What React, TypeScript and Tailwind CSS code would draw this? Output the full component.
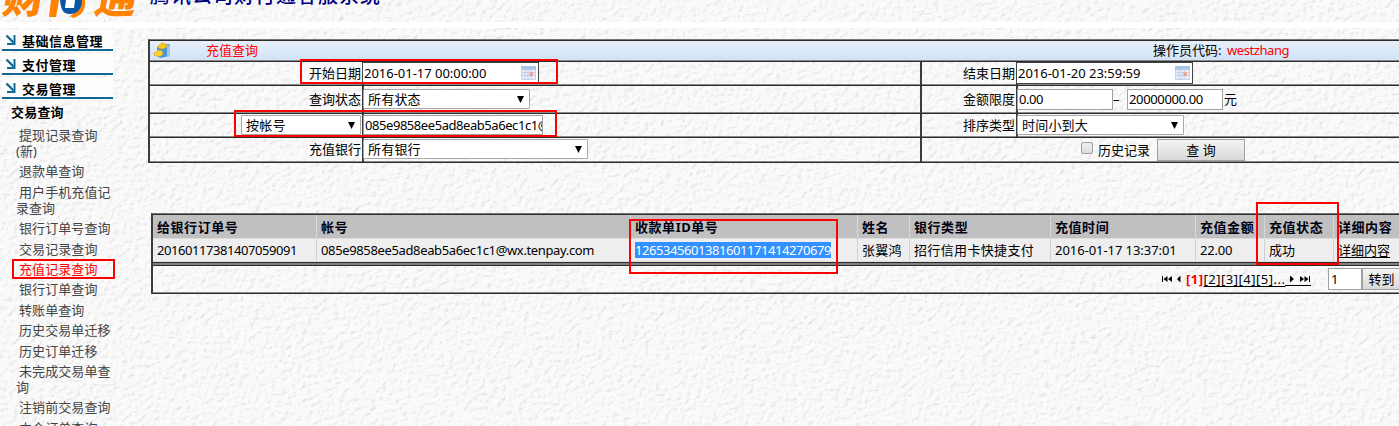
import type { ReactNode } from "react";

function Latin({ children, className = "tracking-[-0.44px]" }: { children: ReactNode; className?: string }) {
  return <span className={className}>{children}</span>;
}

function PaperTexture() {
  return (
    <svg className="absolute inset-0 -z-10" width="1399" height="426" aria-hidden="true">
      <filter id="paper" x="0" y="0" width="100%" height="100%" colorInterpolationFilters="sRGB">
        <feTurbulence type="fractalNoise" baseFrequency="0.19 0.21" numOctaves="3" seed="8" result="n" />
        <feDiffuseLighting in="n" lightingColor="#ffffff" surfaceScale="1.2" diffuseConstant="1.16">
          <feDistantLight azimuth="225" elevation="60" />
        </feDiffuseLighting>
      </filter>
      <rect width="1399" height="426" fill="#f9f9f9" />
      <rect width="1399" height="426" filter="url(#paper)" opacity="0.3" />
    </svg>
  );
}

function Logo() {
  return (
    <svg width="146" height="22" viewBox="0 0 146 22" className="shrink-0">
      <g fontFamily="'Noto Sans CJK SC', sans-serif" fontWeight="900" fontSize="42" fill="#ff8200">
        <text transform="translate(1 13) skewX(-10)">财</text>
        <text transform="translate(93 13) skewX(-10)">通</text>
      </g>
      <path d="M51 0h8l-3 17h-7z" fill="#ff8200" />
      <path d="M79 0h6c1 9-3 16-12 18l-3-2c6-3 9-9 9-16z" fill="#ff8200" />
      <path d="M60 0h22c0 8-4 14-12 14S61 8 60 0z" fill="#0b55a5" />
      <path d="M66 0h9l-1 8h-9z" fill="#fff" />
    </svg>
  );
}

function Arrow() {
  return (
    <svg width="12" height="12" viewBox="0 0 12 12" fill="none" stroke="#126c95" className="-mt-0.5 shrink-0">
      <path d="M1.500 1.500 8.500 8.500" strokeWidth="2.400" />
      <path d="M9.500 1v9H2" strokeWidth="2" />
    </svg>
  );
}

function CalendarIcon() {
  return (
    <svg width="15" height="14" viewBox="0 0 15 14" className="shrink-0">
      <rect width="15" height="14" rx="1" fill="#c3d2ec" />
      <rect width="15" height="3.5" rx="1" fill="#a9c2e6" />
      <rect x="1" y="4" width="13" height="9" fill="#e9effa" />
      <path d="M1 6.5h13M1 9.5h13M4 4v9M7 4v9M10 4v9" stroke="#b7c9e8" strokeWidth=".8" />
      <rect x="8.5" y="6.500" width="3.500" height="3.500" fill="#f2a08a" />
    </svg>
  );
}

function FolderIcon() {
  return (
    <svg width="18" height="17" viewBox="0 0 18 17">
      <path d="M4 5 15 2l2 1v11L7 16l-3-2z" fill="#4a95dc" />
      <path d="m14 3 3 1v10l-3 .7z" fill="#9ccaf4" />
      <path d="M5 4 9 1l4 1 1 3-4 2-4-.5z" fill="#f7c921" stroke="#d79e12" strokeWidth=".6" />
      <path d="m1 11 2-.5L5 8l4 1 1 3-3 2.500-3-.5L1 13z" fill="#ffd52d" stroke="#d79e12" strokeWidth=".6" />
    </svg>
  );
}

function Select({ label, className }: { label: string; className: string }) {
  return (
    <div className={`flex h-[20px] shrink-0 items-center justify-between rounded-[1px] border border-[#a9a9a9] bg-white pr-[5px] pl-[4px] ${className}`}>
      <span className="tracking-[0.2px]">{label}</span>
      <svg width="7" height="7" viewBox="0 0 7 7"><path d="M0 0h7L3.5 7z" fill="#000" /></svg>
    </div>
  );
}

function DateField({ value, className }: { value: string; className: string }) {
  return (
    <div className={`flex h-[22px] w-[177px] items-center justify-between border border-[#444] bg-white pr-0.5 pl-px ${className}`}>
      <Latin className="-mt-px tracking-[-0.02px]">{value}</Latin>
      <CalendarIcon />
    </div>
  );
}

function Row({ className, left, leftField, right, rightField }: {
  className: string; left: ReactNode; leftField: ReactNode; right: ReactNode; rightField: ReactNode;
}) {
  return (
    <div className={`flex border-b border-[#2c2c2c] shadow-[inset_0_-1px_#8a8a8a] ${className}`}>
      <div className="flex w-[214px] shrink-0 items-center justify-end border-r-2 border-[#3c3c3c] pr-px pb-0.5">{left}</div>
      <div className="flex w-[556px] shrink-0 items-center pb-px">{leftField}</div>
      <div className="flex w-[98px] shrink-0 items-center justify-end border-l-2 border-r-2 border-[#3c3c3c] pr-px pb-0.5">{right}</div>
      <div className="flex flex-1 items-center pb-px">{rightField}</div>
    </div>
  );
}

const menu: { lines: string[]; active?: boolean }[] = [
  { lines: ["提现记录查询", "(新)"] },
  { lines: ["退款单查询"] },
  { lines: ["用户手机充值记", "录查询"] },
  { lines: ["银行订单号查询"] },
  { lines: ["交易记录查询"] },
  { lines: ["充值记录查询"], active: true },
  { lines: ["银行订单查询"] },
  { lines: ["转账单查询"] },
  { lines: ["历史交易单迁移"] },
  { lines: ["历史订单迁移"] },
  { lines: ["未完成交易单查", "询"] },
  { lines: ["注销前交易查询"] },
  { lines: ["中介订单查询"] },
];

const grid = "grid grid-cols-[164px_314px_227px_52px_141px_145px_69px_69px_80px]";
const heads = ["给银行订单号", "帐号", "收款单ID单号", "姓名", "银行类型", "充值时间", "充值金额", "充值状态", "详细内容"];

export default function App() {
  return (
    <div className="relative isolate flex h-[426px] w-[1399px] flex-col overflow-hidden font-['Noto_Sans','Noto_Sans_CJK_SC',sans-serif] text-[13px] leading-4 whitespace-nowrap text-black">
      <PaperTexture />
      <header className="flex h-[22px] shrink-0 overflow-hidden">
        <Logo />
        <h1 className="-mt-[16px] ml-[4px] text-[20px] leading-6 font-medium tracking-[1px] text-[#000080]">腾讯公司财付通客服系统</h1>
      </header>
      <div className="h-[6px] shrink-0 bg-white" />
      <div className="flex min-h-0 flex-1">
        <nav className="w-[148px] shrink-0 text-[#444]">
          <div className="ml-0.5 w-[111px] pt-[2px]">
            {["基础信息管理", "支付管理", "交易管理"].map((t) => (
              <div key={t} className="mb-[3px] flex h-[21px] items-center gap-[5px] border-b-2 border-[#126890] bg-white/80 pt-[2px] pl-[3px] font-bold tracking-[0.5px] text-black">
                <Arrow />
                {t}
              </div>
            ))}
          </div>
          <div className="mt-[5px] mb-[7px] ml-[11px] font-bold tracking-[0.2px] text-black">交易查询</div>
          <ul className="-ml-px flex flex-col gap-[4.4px]">
            {menu.map((m) => (
              <li key={m.lines[0]} className={m.active ? "text-[#ff0000]" : ""}>
                <div className="pl-5 tracking-[0.08px]">{m.lines[0]}</div>
                {m.lines[1] && <div className="pl-[17px]">{m.lines[1]}</div>}
              </li>
            ))}
          </ul>
        </nav>
        <main className="min-w-0 flex-1 pt-[11px]">
          <section className="h-[124px] border-t border-l-2 border-t-[#777] border-l-[#3c3c3c]">
            <div className="flex h-[22px] items-center border-b border-[#2c2c2c] bg-linear-to-b from-[#e8f0f9] to-[#cfe2f7] pb-px pl-[3px] shadow-[inset_0_1px_#2c2c2c,inset_0_-1px_#8a8a8a]">
              <div className="pt-px"><FolderIcon /></div>
              <span className="ml-[35px] w-[947px] pb-px text-[#ff0000]">充值查询</span>
              <span>操作员代码: <Latin className="ml-0.5 tracking-[-0.4px] text-[#ff0000]">westzhang</Latin></span>
            </div>
            <Row className="h-6" left="开始日期" leftField={<DateField value="2016-01-17 00:00:00" className="-ml-0.5" />}
              right="结束日期" rightField={<DateField value="2016-01-20 23:59:59" className="-ml-0.5" />} />
            <Row className="h-7" left="查询状态" leftField={<Select label="所有状态" className="-ml-px w-[167px]" />} right="金额限度"
              rightField={
                <>
                  <div className="-ml-px h-[21px] w-[96px] border border-[#a0a0a0] bg-white pt-px pl-px"><Latin>0.00</Latin></div>
                  <span className="w-3.5">–</span>
                  <div className="h-[21px] w-[96px] border border-[#a0a0a0] bg-white pt-px pl-px"><Latin className="tracking-[-0.36px]">20000000.00</Latin></div>
                  <span className="ml-px">元</span>
                </>
              } />
            <Row className="h-6" left={<Select label="按帐号" className="mt-px w-[120px]" />}
              leftField={<div className="-ml-px h-[20px] w-[180px] overflow-hidden border border-[#a0a0a0] bg-white pt-px pl-px"><Latin>085e9858ee5ad8eab5a6ec1c1@</Latin></div>}
              right="排序类型" rightField={<Select label="时间小到大" className="-ml-px w-[167px]" />} />
            <div className="flex h-[25px] border-b border-[#2c2c2c] shadow-[inset_0_-1px_#8a8a8a]">
              <div className="flex w-[214px] items-center justify-end border-r-2 border-[#3c3c3c] pr-px pb-0.5">充值银行</div>
              <div className="flex w-[556px] items-center pb-0.5"><Select label="所有银行" className="-ml-px w-[225px]" /></div>
              <div className="flex flex-1 items-center border-l-2 border-[#3c3c3c] pb-px pl-[159px]">
                <span className="mb-1 size-3 rounded-[2px] border border-[#a0a0a0] bg-linear-to-b from-[#eee] to-[#ddd]" />
                <span className="ml-[5px]">历史记录</span>
                <button className="ml-[7px] h-[22px] w-[88px] border border-[#a0a0a0] bg-linear-to-b from-[#f4f4f4] to-[#d9d9d9]">查 询</button>
              </div>
            </div>
          </section>
          <section className="mt-[50px] ml-[3px] h-[81px] border-t border-b border-l-2 border-t-[#777] border-b-[#2c2c2c] border-l-[#3c3c3c]">
            <div className={`${grid} h-[25px] border-t border-b border-t-[#2c2c2c] border-b-[#ddd] bg-[#c0c0c0] font-bold tracking-[0.55px] text-[#000010]`}>
              {heads.map((h) => (
                <div key={h} className="flex items-center border-r border-[#d8d8d8] pl-1">{h}</div>
              ))}
            </div>
            <div className={`${grid} h-[23px] border-b border-[#ddd] bg-[#eee]`}>
              {[
                <Latin>20160117381407059091</Latin>,
                <Latin className="tracking-[-0.36px]">085e9858ee5ad8eab5a6ec1c1@wx.tenpay.com</Latin>,
                <Latin className="bg-[#3390ff] tracking-[-0.44px] text-white">1265345601381601171414270679</Latin>,
                <span className="tracking-[0.3px]">张翼鸿</span>,
                <span className="tracking-[0.35px]">招行信用卡快捷支付</span>,
                <Latin className="tracking-[-0.06px]">2016-01-17 13:37:01</Latin>,
                <Latin className="tracking-[-0.2px]">22.00</Latin>,
                "成功",
                <span className="underline underline-offset-2">详细内容</span>,
              ].map((c, i) => (
                <div key={i} className="flex items-center border-r border-[#d0d0d0] pl-1">{c}</div>
              ))}
            </div>
            <div className="h-1 border-y border-[#2c2c2c] bg-[#808080]" />
            <div className="flex h-[27px] items-center border-b border-[#8a8a8a] pl-[1009px]">
              <svg className="shrink-0" width="20" height="8" viewBox="0 0 20 8"><path d="M0 1h1v6H0zM5.500 1v6L1.500 4zM10 1v6L6 4zM18.500 0.500v7L15 4z" /></svg>
              <span className="ml-[4px] tracking-[0.5px]"><b className="text-[#ff0000]">[1]</b><span className="underline underline-offset-2">[2][3][4][5]...</span></span>
              <span className="mt-px flex h-[13px] items-center border-b border-black pl-1">
                <svg width="22" height="9" viewBox="0 0 22 9"><path d="M1 0.500v7l4-3.500zM11 1v6l4-3zM15.500 1v6l4-3zM20 1h1v6h-1z" /></svg>
              </span>
              <div className="ml-auto h-[22px] w-[34px] shrink-0 border border-[#a0a0a0] bg-white pt-0.5 pl-0.5">1</div>
              <button className="h-[22px] w-[37px] shrink-0 border-y border-l border-[#a0a0a0] bg-linear-to-b from-[#f4f4f4] to-[#d9d9d9] pl-px">转到</button>
            </div>
          </section>
        </main>
      </div>
      <div className="absolute top-[59px] left-[300px] h-[25px] w-[258px] border-2 border-[#ff0000]" />
      <div className="absolute top-[110px] left-[234px] h-[27px] w-[323px] border-2 border-[#ff0000]" />
      <div className="absolute top-[259px] left-[12px] h-5 w-[103px] border-2 border-[#ff0000]" />
      <div className="absolute top-[219px] left-[629px] h-[55px] w-[209px] border-2 border-[#ff0000]" />
      <div className="absolute top-[202px] left-[1256px] h-[63px] w-[83px] border-2 border-[#ff0000]" />
    </div>
  );
}
